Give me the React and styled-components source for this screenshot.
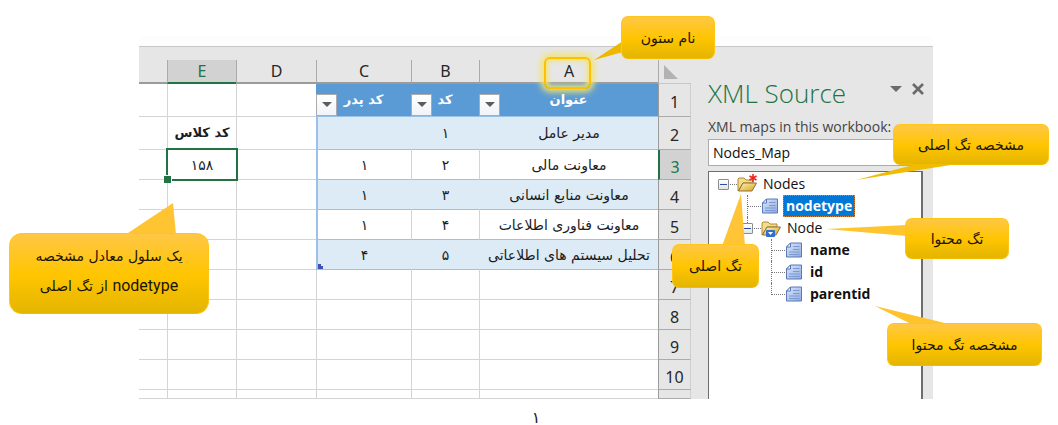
import React from "react";
import styled, { createGlobalStyle, css } from "styled-components";

const persian = `"DejaVu Sans", sans-serif`;
const latin = `"Open Sans", "Noto Sans", sans-serif`;

const GlobalStyle = createGlobalStyle`
  *, *::before, *::after { box-sizing: border-box; }
  body { margin: 0; background: #fff; color: #1c1c1c; font-family: ${persian}; }
`;

const Page = styled.main`
  padding-top: 36px;
  overflow: hidden;
`;

const Figure = styled.section`
  margin: 0 125px 0 139px;
  border-top: 10px solid #fdfdfd;
`;

const Workbook = styled.div`
  display: flex;
  border-top: 1px solid #c6c6c6;
  background: #e6e6e6;
`;

const Sheet = styled.div`
  flex: 1;
  min-width: 0;
  padding-top: 13px;
`;

const Grid = styled.table`
  width: 100%;
  table-layout: fixed;
  border-collapse: separate;
  border-spacing: 0;
  direction: rtl;
`;

const Col = styled.col`
  width: ${(p) => (p.$w ? `${p.$w}px` : "auto")};
`;

const Row = styled.tr`
  height: ${(p) => p.$h}px;
`;

const ColumnHead = styled.th`
  position: relative;
  padding: 0;
  border-left: 1px solid #ababab;
  border-bottom: 2px solid ${(p) => (p.$selected ? "#217346" : "#9b9b9b")};
  background: ${(p) => (p.$selected ? "#d2d2d2" : "#e6e6e6")};
  color: ${(p) => (p.$selected ? "#217346" : "#262626")};
  font: 400 16px/20px "Noto Sans", sans-serif;
  &:last-child { border-left: 0; }
`;

const Corner = styled(ColumnHead)`
  border-bottom: 1px solid #c6c6c6;
  vertical-align: top;
  svg { display: block; margin: 5px 13px 0 auto; }
`;

const RowHead = styled.th`
  padding: 4px 0 0;
  border-left: ${(p) => (p.$selected ? "2px solid #217346" : "1px solid #9b9b9b")};
  border-right: 1px solid #cfcfcf;
  border-bottom: 1px solid #ababab;
  background: ${(p) => (p.$selected ? "#d2d2d2" : "#e6e6e6")};
  color: ${(p) => (p.$selected ? "#217346" : "#262626")};
  font: 400 16px/20px "Noto Sans", sans-serif;
`;

const Cell = styled.td`
  position: relative;
  padding: 0;
  border-left: 1px solid #d4d4d4;
  border-bottom: 1px solid #d4d4d4;
  background: #fff;
  text-align: center;
  white-space: nowrap;
  font: 400 14px/20px ${persian};
  &:last-child { border-left: 0; }
  ${(p) => p.$table && css`border-bottom-color: #9bc2e6;`}
  ${(p) => p.$band && css`background: #ddebf7; border-left-color: #ddebf7;`}
  ${(p) => p.$edge && css`border-left: 2px solid #9bc2e6;`}
  ${(p) => p.$bold && css`font-weight: 700; font-size: 13px;`}
`;

const TitleCell = styled.td`
  padding: 0;
  border-bottom: 1px solid #9bc2e6;
  background: #5b9bd5;
  color: #fff;
  font: 700 13px/20px ${persian};
`;

const TitleBox = styled.div`
  display: grid;
  height: 32px;
  > * { grid-area: 1 / 1; }
`;

const TitleText = styled.span`
  place-self: center;
`;

const FilterButton = styled.button`
  place-self: end end;
  display: grid;
  place-items: center;
  width: 21px;
  height: 22px;
  padding: 0;
  border: 1px solid #ababab;
  background: linear-gradient(#fff, #f1f3f6);
`;

const ActiveCell = styled.span`
  position: absolute;
  z-index: 1;
  inset: -2px -2px -2px -2px;
  border: 2px solid #217346;
  &::after {
    content: "";
    position: absolute;
    left: -4px;
    bottom: -4px;
    width: 8px;
    height: 8px;
    border: 1px solid #fff;
    border-width: 1px 1px 0 0;
    background: #217346;
  }
`;

const TableHandle = styled.span`
  position: absolute;
  left: 0;
  bottom: 0;
  width: 5px;
  height: 5px;
  border: solid #3f51b5;
  border-width: 0 0 3px 3px;
`;

const HeadMarker = styled.span`
  position: absolute;
  left: 64px;
  top: -3px;
  width: 47px;
  height: 32px;
  border: 2px solid #ffc000;
  border-radius: 6px;
  box-shadow: 0 0 6px 3px #f3e36f, inset 0 0 5px 2px #f3e36f;
`;

const Panel = styled.aside`
  position: relative;
  display: flex;
  flex-direction: column;
  flex: 0 0 242px;
  padding: 28px 10px 0 17px;
  font-family: ${latin};
`;

const PanelHead = styled.header`
  display: flex;
  align-items: center;
  height: 36px;
`;

const PanelTitle = styled.h1`
  flex: 1;
  margin: 0;
  color: #217346;
  font: 300 26px/36px ${latin};
  white-space: nowrap;
`;

const PanelButton = styled.button`
  display: grid;
  place-items: center;
  width: 22px;
  height: 22px;
  margin-top: -8px;
  margin-right: -6px;
  margin-left: 6px;
  padding: 0;
  border: 0;
  background: none;
`;

const MapLabel = styled.label`
  margin-top: 6px;
  color: #444;
  font-size: 14px;
  line-height: 20px;
  white-space: nowrap;
`;

const MapSelect = styled.select`
  appearance: none;
  width: 100%;
  height: 27px;
  margin: 2px 0 5px;
  padding: 0 4px;
  border: 1px solid #ababab;
  border-radius: 0;
  background: #fff;
  color: #111;
  font: 400 14px/20px ${latin};
`;

const TreeBox = styled.div`
  flex: 1;
  padding-top: 1px;
  border: solid #6d6d6d;
  border-width: 1px 2px 0 1px;
  background: #fff;
`;

const Tree = styled.ul`
  margin: 0;
  padding: 0 0 0 ${(p) => (p.$root ? 9 : 24)}px;
  list-style: none;
`;

const TreeRow = styled.div`
  display: flex;
  align-items: center;
  height: 22px;
`;

const Branch = styled.span`
  position: relative;
  display: flex;
  align-items: center;
  flex: 0 0 19px;
  height: 22px;
  &::before {
    content: "";
    position: absolute;
    left: 5px;
    top: 0;
    height: ${(p) => (p.$last ? 12 : 22)}px;
    border-left: ${(p) => (p.$root ? 0 : 1)}px dotted #777;
  }
  &::after {
    content: "";
    flex: 1;
    margin-left: ${(p) => (p.$leaf ? 5 : 1)}px;
    border-top: 1px dotted #777;
  }
`;

const Toggle = styled.button`
  position: relative;
  display: grid;
  place-items: center;
  width: 11px;
  height: 11px;
  padding: 0;
  border: 1px solid #8c8c8c;
  border-radius: 1px;
  background: linear-gradient(#fff, #e4e4e4);
`;

const NodeLabel = styled.span`
  margin-left: ${(p) => (p.$bold ? 4 : 3)}px;
  padding: 0 2px;
  border: 1px dotted ${(p) => (p.$selected ? "#d9813a" : "transparent")};
  background: ${(p) => (p.$selected ? "#0078d7" : "transparent")};
  color: ${(p) => (p.$selected ? "#fff" : "#111")};
  font-size: 14px;
  font-weight: ${(p) => (p.$bold ? 700 : 400)};
  line-height: 20px;
`;

/* Callouts float over the thing they explain and are anchored to it. */
const CalloutAnchor = styled.div`
  position: absolute;
  z-index: 3;
  left: ${(p) => p.$x}px;
  top: ${(p) => p.$y}px;
  width: ${(p) => p.$w}px;
  direction: ltr;
`;

const Tail = styled.svg`
  position: absolute;
  left: 0;
  top: 0;
  width: 1px;
  height: 1px;
  overflow: visible;
`;

const Bubble = styled.div`
  position: relative;
  display: grid;
  place-items: center;
  min-height: ${(p) => p.$h}px;
  padding-bottom: ${(p) => (p.$large ? 6 : 0)}px;
  border: 1px solid #ffc61a;
  border-bottom-color: #f2bd00;
  border-radius: ${(p) => (p.$large ? 13 : 7)}px;
  background: linear-gradient(#ffc746, #ffc500 52%, #e4b500);
  color: #1a1400;
  direction: rtl;
  text-align: center;
  white-space: nowrap;
  font: 400 14px/30px ${persian};
`;

const Latin = styled.span`
  font: 400 16px/30px Roboto, sans-serif;
`;

const PageNumber = styled.footer`
  padding: 12px 0 0 14px;
  text-align: center;
  font: 400 16px/14px ${persian};
`;

function Callout({ x, y, w, h, tail, fill, large, children }) {
  return (
    <CalloutAnchor $x={x} $y={y} $w={w}>
      <Tail aria-hidden="true"><polygon points={tail} fill={fill} /></Tail>
      <Bubble $h={h} $large={large}><span>{children}</span></Bubble>
    </CalloutAnchor>
  );
}

const Caret = () => (
  <svg width="10" height="6" viewBox="0 0 10 6" aria-hidden="true"><path d="M0 0h10L5 5z" fill="#5c5c5c" /></svg>
);

const CloseIcon = () => (
  <svg width="14" height="14" viewBox="0 0 14 14" aria-hidden="true"><path d="M2 2l10 10M12 2L2 12" stroke="#6a6a6a" strokeWidth="2.6" /></svg>
);

const FolderIcon = ({ mark }) => (
  <svg width="20" height="20" viewBox="0 0 20 20" aria-hidden="true">
    <defs>
      <linearGradient id="folderFront" x1="0" y1="0" x2="1" y2="1">
        <stop offset="0" stopColor="#fff3b8" /><stop offset="1" stopColor="#d9a21c" />
      </linearGradient>
    </defs>
    <path d="M1 17V5l1-1h5l2 2h7v3H6z" fill="#f5dc8a" stroke="#b08a3a" />
    <path d="M1.500 17L6 9h13.500l-4.500 8z" fill="url(#folderFront)" stroke="#8a733c" />
    {mark === "star" && <path d="M16 0v8M12.500 2l7 4M19.500 2l-7 4" stroke="#f0201c" strokeWidth="1.500" />}
    {mark === "repeat" && (
      <g><rect x="5" y="12" width="9" height="7" rx="1" fill="#2f6fd0" /><path d="M7 14h5l-2.500 3z" fill="#fff" /></g>
    )}
  </svg>
);

const DocIcon = () => (
  <svg width="18" height="16" viewBox="0 0 18 16" aria-hidden="true">
    <defs>
      <linearGradient id="docFill" x1="0" y1="0" x2="1" y2="1">
        <stop offset="0" stopColor="#dce8fb" /><stop offset="1" stopColor="#8fabe0" />
      </linearGradient>
    </defs>
    <path d="M5.500 1h11v14h-15V5z" fill="url(#docFill)" stroke="#5b78b8" />
    <path d="M5.500 1v4h-4z" fill="#f4f8ff" stroke="#5b78b8" />
    <path d="M8 4.500h6.500M8 7.500h6.500M4 10h10.500M4 12.500h10.500" stroke="#7d99d2" />
  </svg>
);

const Minus = () => (
  <svg width="7" height="1" viewBox="0 0 7 1" aria-hidden="true"><path d="M0 .5h7" stroke="#2b51a5" /></svg>
);

const rows = [
  { n: 2, h: 33, a: "مدیر عامل", b: "۱", c: "", e: "کد کلاس", band: true },
  { n: 3, h: 30, a: "معاونت مالی", b: "۲", c: "۱", e: "۱۵۸", active: true },
  { n: 4, h: 30, a: "معاونت منابع انسانی", b: "۳", c: "۱", band: true },
  { n: 5, h: 30, a: "معاونت فناوری اطلاعات", b: "۴", c: "۱" },
  { n: 6, h: 30, a: "تحلیل سیستم های اطلاعاتی", b: "۵", c: "۴", band: true, last: true },
];

const titles = ["عنوان", "کد", "کد پدر"];

function TreeItem({ label, root, leaf, last, selected, mark, children }) {
  return (
    <li>
      <TreeRow>
        <Branch $root={root} $leaf={leaf} $last={last}>
          {!leaf && <Toggle aria-label={`Collapse ${label}`}><Minus /></Toggle>}
        </Branch>
        {leaf ? <DocIcon /> : <FolderIcon mark={mark} />}
        <NodeLabel $bold={leaf} $selected={selected}>{label}</NodeLabel>
      </TreeRow>
      {children && <Tree>{children}</Tree>}
    </li>
  );
}

export default function App() {
  return (
    <Page>
      <GlobalStyle />
      <Figure>
        <Workbook>
          <Sheet>
            <Grid>
              <colgroup>
                <Col $w={33} /><Col $w={179} /><Col $w={68} /><Col $w={95} /><Col $w={80} /><Col $w={69} /><Col />
              </colgroup>
              <thead>
                <Row $h={24}>
                  <Corner>
                    <svg width="14" height="14" viewBox="0 0 14 14" aria-hidden="true"><path d="M0 0v14h14z" fill="#b2b2b2" /></svg>
                  </Corner>
                  <ColumnHead scope="col">
                    A
                    <HeadMarker />
                    <Callout x={141} y={-44} w={94} h={43} tail="-27,44 2,25 2,36" fill="#ecb900">نام ستون</Callout>
                  </ColumnHead>
                  <ColumnHead scope="col">B</ColumnHead>
                  <ColumnHead scope="col">C</ColumnHead>
                  <ColumnHead scope="col">D</ColumnHead>
                  <ColumnHead scope="col" $selected>E</ColumnHead>
                  <ColumnHead />
                </Row>
              </thead>
              <tbody>
                <Row $h={33}>
                  <RowHead scope="row">1</RowHead>
                  {titles.map((t) => (
                    <TitleCell key={t}>
                      <TitleBox>
                        <TitleText>{t}</TitleText>
                        <FilterButton aria-label={`فیلتر ${t}`}><Caret /></FilterButton>
                      </TitleBox>
                    </TitleCell>
                  ))}
                  <Cell /><Cell /><Cell />
                </Row>
                {rows.map((r) => (
                  <Row key={r.n} $h={r.h}>
                    <RowHead scope="row" $selected={r.active}>{r.n}</RowHead>
                    <Cell $table $band={r.band}>{r.a}</Cell>
                    <Cell $table $band={r.band}>{r.b}</Cell>
                    <Cell $table $band={r.band} $edge>{r.c}{r.last && <TableHandle />}</Cell>
                    <Cell />
                    <Cell $bold={r.n === 2}>
                      {r.e}
                      {r.active && (
                        <>
                          <ActiveCell />
                          <Callout x={-159} y={83} w={200} h={81} large tail="164,-30 116,2 167,2" fill="#ffc432">
                            یک سلول معادل مشخصه<br /><Latin>nodetype</Latin> از تگ اصلی
                          </Callout>
                        </>
                      )}
                    </Cell>
                    <Cell />
                  </Row>
                ))}
                {[7, 8, 9, 10].map((n) => (
                  <Row key={n} $h={30}>
                    <RowHead scope="row">{n}</RowHead>
                    <Cell /><Cell /><Cell /><Cell /><Cell /><Cell />
                  </Row>
                ))}
                <Row $h={9}>
                  <RowHead /><Cell /><Cell /><Cell /><Cell /><Cell /><Cell />
                </Row>
              </tbody>
            </Grid>
          </Sheet>
          <Panel>
            <PanelHead>
              <PanelTitle>XML Source</PanelTitle>
              <PanelButton aria-label="Task pane options">
                <svg width="12" height="7" viewBox="0 0 12 7" aria-hidden="true"><path d="M0 0h12L6 6z" fill="#6a6a6a" /></svg>
              </PanelButton>
              <PanelButton aria-label="Close"><CloseIcon /></PanelButton>
            </PanelHead>
            <MapLabel htmlFor="xml-map">XML maps in this workbook:</MapLabel>
            <MapSelect id="xml-map"><option>Nodes_Map</option></MapSelect>
            <TreeBox>
              <Tree $root>
                <TreeItem label="Nodes" root mark="star">
                  <TreeItem label="nodetype" leaf selected />
                  <TreeItem label="Node" mark="repeat" last>
                    <TreeItem label="name" leaf />
                    <TreeItem label="id" leaf />
                    <TreeItem label="parentid" leaf last />
                  </TreeItem>
                </TreeItem>
              </Tree>
            </TreeBox>
            <Callout x={202} y={77} w={156} h={41} tail="-37,56 24,40 64,40" fill="#f0bb00">مشخصه تگ اصلی</Callout>
            <Callout x={214} y={171} w={104} h={41} tail="-79,11 2,7 2,18" fill="#ffc52e">تگ محتوا</Callout>
            <Callout x={196} y={276} w={155} h={43} tail="-12,-17 26,2 66,2" fill="#ffc42c">مشخصه تگ محتوا</Callout>
            <Callout x={-19} y={197} w={87} h={44} tail="69,-50 50,2 73,2" fill="#ffc536">تگ اصلی</Callout>
          </Panel>
        </Workbook>
      </Figure>
      <PageNumber>۱</PageNumber>
    </Page>
  );
}
